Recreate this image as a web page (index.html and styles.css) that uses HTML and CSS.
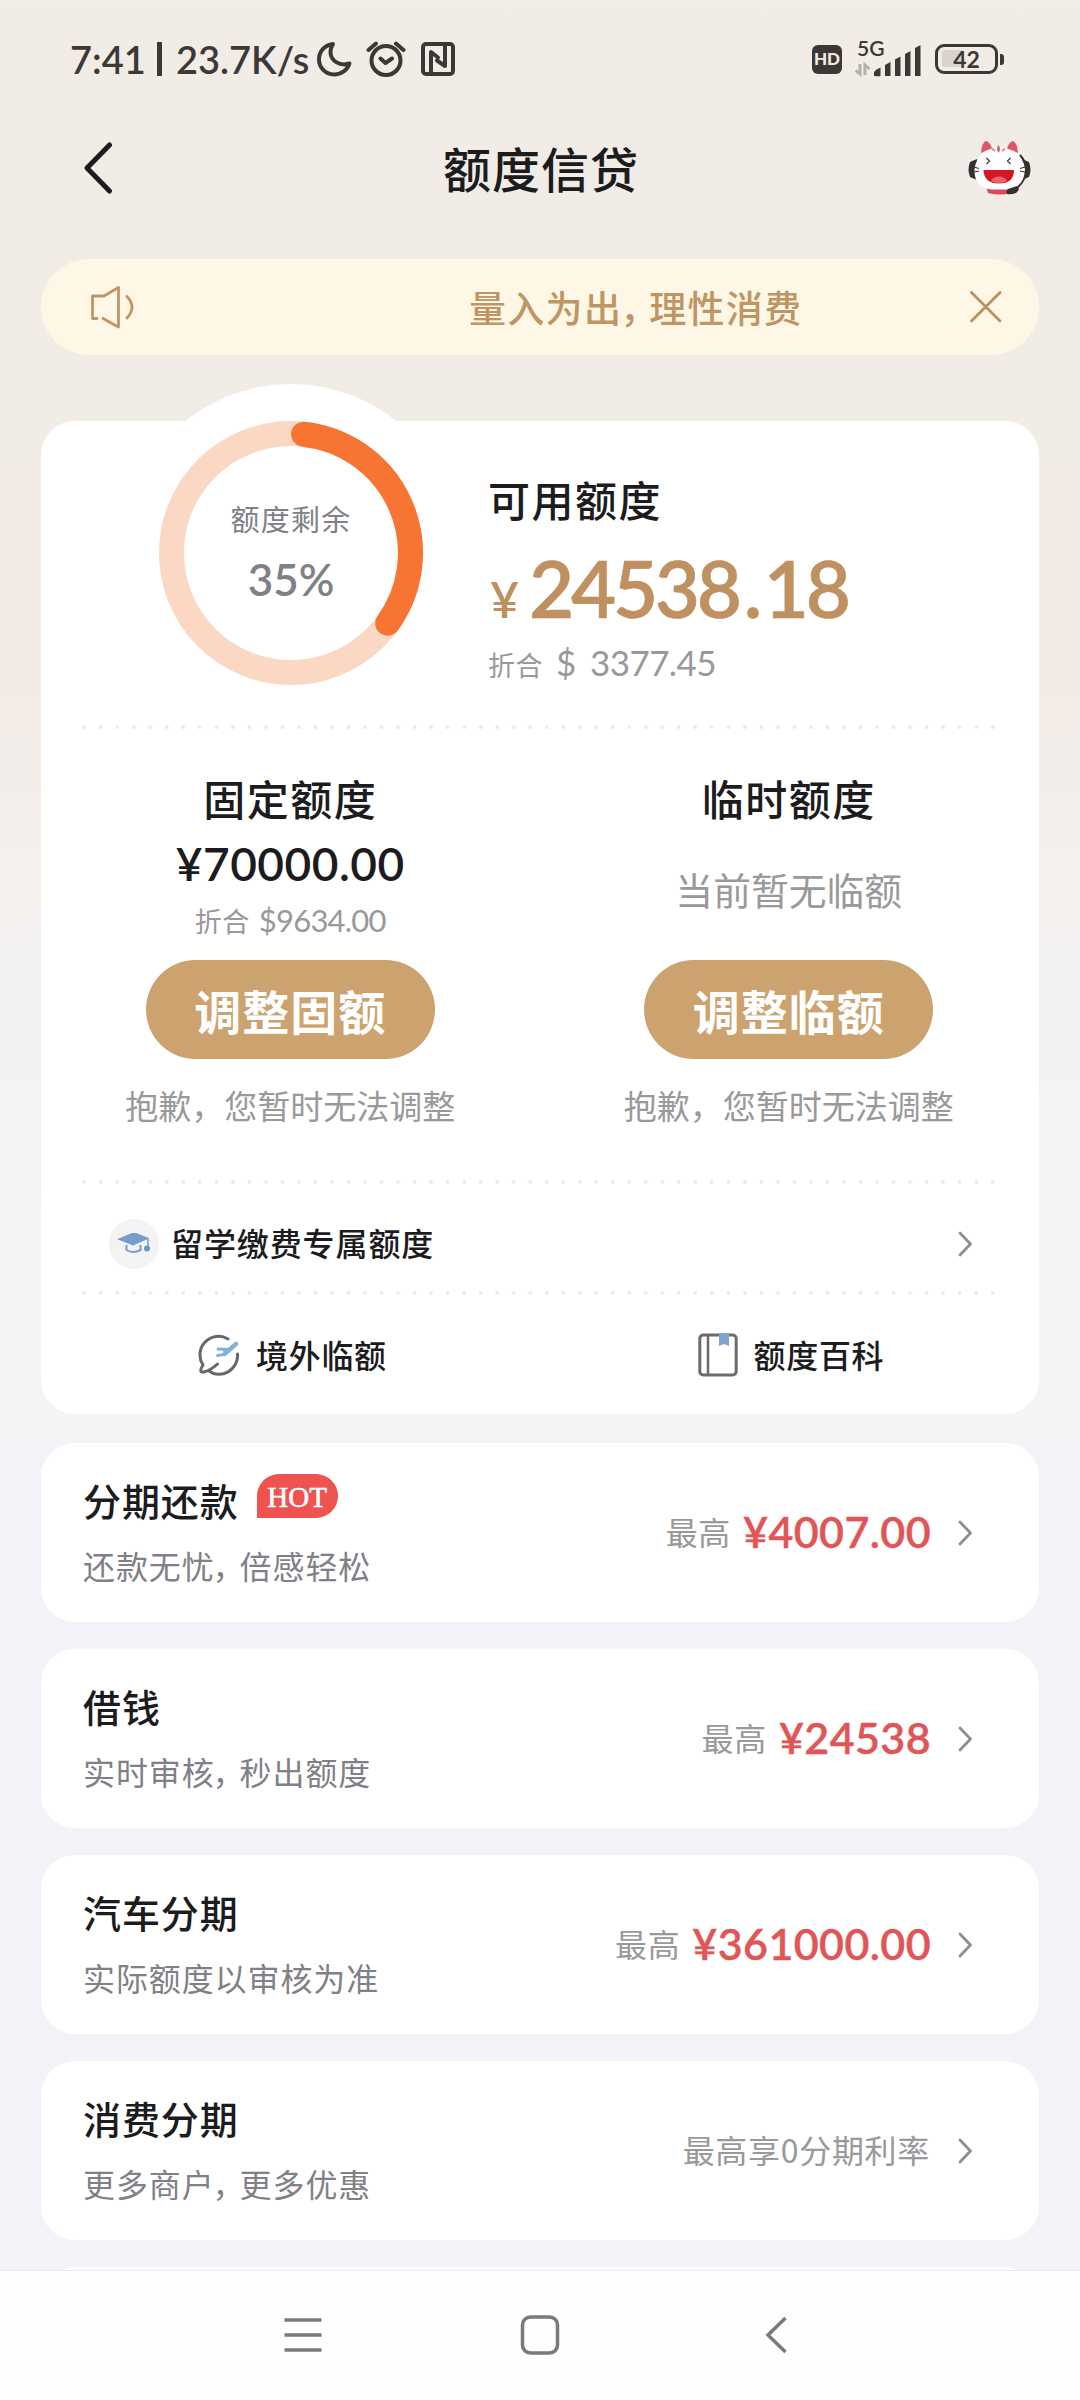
FILE: index.html
```html
<!DOCTYPE html>
<html lang="zh-CN">
<head>
<meta charset="utf-8">
<title>额度信贷</title>
<link rel="stylesheet" href="styles.css">
</head>
<body>
<div class="screen">
  <div class="status">
    <span class="status-time">7:41</span>
    <span class="status-sep"></span>
    <span class="status-speed">23.7K/s</span>
    <svg class="moon" width="36" height="36" viewBox="0 0 36 36"><path d="M17 3C9 4 3 10 3 18.500C3 27 10 33.500 18 33.500C25.500 33.500 31.500 29 33.500 22.500C24 25.500 15 20 14.500 12C14.500 8 15.500 5 17 3Z" fill="none" stroke="#3d3835" stroke-width="4" stroke-linejoin="round"/></svg>
    <svg class="alarm" width="40" height="36" viewBox="0 0 40 36" fill="none" stroke="#3d3835" stroke-width="4" stroke-linecap="round" stroke-linejoin="round"><circle cx="20" cy="19.500" r="14.500"/><path d="M2.500 9L10 2.500M37.500 9L30 2.500M14.500 17.500L19.500 22L26 17.500"/></svg>
    <svg class="nfc" width="34" height="34" viewBox="0 0 34 34" fill="none" stroke="#3d3835" stroke-width="4" stroke-linejoin="round"><rect x="2" y="2" width="30" height="30" rx="3"/><path d="M10 32V10L17 15.500M24 2V24L16 18.500" stroke-linecap="round"/></svg>
    <span class="spacer"></span>
    <span class="hd">HD</span>
    <span class="network">
      <span class="network-type">5G</span>
      <svg width="66" height="36" viewBox="0 0 66 36"><g fill="#3d3835"><path d="M19 35V31Q21 28 25.500 26.500V35Q25 35.500 19 35Z"/><path d="M30 35V24L35.500 21V35Z"/><path d="M40 35V18.500L45.500 15.500V35Z"/><path d="M50 35V13L55.500 10V35Z"/><path d="M60 35V7L65.500 4V35Z"/></g><path d="M5 23V33L.500 29.500M10 34V24L14.500 28" fill="none" stroke="#b5b0ab" stroke-width="3"/></svg>
    </span>
    <span class="battery"><span class="battery-fill"></span><span class="battery-text">42</span></span>
    <span class="battery-nub"></span>
  </div>

  <div class="header">
    <svg class="back" width="30" height="52" viewBox="0 0 30 52"><path d="M26.500 3L4 26L26.500 49" fill="none" stroke="#1c1c1e" stroke-width="5" stroke-linecap="round" stroke-linejoin="round"/></svg>
    <h1>额度信贷</h1>
    <svg class="mascot" width="64" height="56" viewBox="0 0 64 56">
      <path d="M18 46H46L43 53Q32 56 20 53Z" fill="#d94b5c"/>
      <path d="M9 19L2 22Q-1 30 2 37L9 40ZM54 19L61 22Q64 30 61 37L54 40Z" fill="#34312f"/>
      <path d="M32 7C46 7 57 18 57 31C57 42 50 49 40 49.500H24C13 49 6.500 42 6.500 31C6.500 18 18 7 32 7Z" fill="#fff"/>
      <path d="M13 13Q14 2 18 1Q22 2 24 8.500Q18 10 13 13Z" fill="#df5668"/><path d="M50 13Q49 2 45 1Q41 2 39 8.500Q45 10 50 13Z" fill="#df5668"/>
      <path d="M52 15Q59 23 58 31Q57 41 50 47L42 52" fill="none" stroke="#34312f" stroke-width="2"/>
      <path d="M39 54Q37 49 43 48L49 46L51 49Q49 55 39 54Z" fill="#34312f"/>
      <path d="M15.500 30H46Q46 43.500 31 43.500Q16 43.500 15.500 30Z" fill="#d61524"/><path d="M23 41Q25 36.500 31 36.500Q37 36.500 39 41Q31 45 23 41Z" fill="#ee626b"/>
      <path d="M30.500 5Q27.500 9 30.500 13Q33.500 9 30.500 5Z" fill="#c9656f"/><path d="M24 8.500L27 11M37 8.500L34 11" stroke="#d98b8f" stroke-width="2"/>
      <path d="M18.500 18L21.500 21L18.500 24M42.500 18L39.500 21L42.500 24M6 27L11 28.500M6 32L11 31M57 27L52 28.500M57 32L52 31" fill="none" stroke="#383230" stroke-width="1.200"/>
    </svg>
  </div>

  <div class="notice">
    <svg width="46" height="44" viewBox="0 0 46 44" fill="none" stroke="#c09566" stroke-width="2.800" stroke-linecap="round" stroke-linejoin="round"><path d="M7 33.500H2.500V11H14L28.500 2.500V42L13 33.500M37 11.500Q47 22 37 33"/></svg>
    <p>量入为出<i>，</i>理性消费</p>
    <svg width="34" height="34" viewBox="0 0 34 34"><path d="M2.500 2.500L31 31M31 2.500L2.500 31" fill="none" stroke="#bb8f60" stroke-width="2.800" stroke-linecap="round"/></svg>
  </div>

  <main class="limit-card">
    <section class="summary">
      <div class="donut">
        <svg width="338" height="338" viewBox="-169 -169 338 338" fill="none">
          <circle r="169" fill="#fff"/>
          <circle r="119.500" stroke="#fad8c3" stroke-width="25"/>
          <path d="M12.500 -118.800A119.500 119.500 0 0 1 96.700 70.200" stroke="#f87432" stroke-width="25" stroke-linecap="round"/>
        </svg>
        <div class="donut-text"><span class="donut-label">额度剩余</span><span class="donut-value">35%</span></div>
      </div>
      <div class="available">
        <h2>可用额度</h2>
        <div class="available-amount"><small>¥</small><b>24538<i>.</i>18</b></div>
        <div class="available-usd"><span>折合</span><b>$ 3377.45</b></div>
      </div>
    </section>
    <div class="dots"></div>
    <section class="columns">
      <div class="column">
        <h2>固定额度</h2>
        <div class="fixed-amount">¥70000.00</div>
        <div class="fixed-usd"><span>折合</span><b>$9634.00</b></div>
        <button class="adjust">调整固额</button>
        <p class="sorry">抱歉，您暂时无法调整</p>
      </div>
      <div class="column">
        <h2>临时额度</h2>
        <div class="none">当前暂无临额</div>
        <button class="adjust">调整临额</button>
        <p class="sorry">抱歉，您暂时无法调整</p>
      </div>
    </section>
    <div class="dots"></div>
    <div class="study">
      <span class="study-icon"><svg width="32" height="22" viewBox="0 0 32 22"><path d="M0 6.500L16 0L30 5.500V15" fill="none" stroke="#759ecb" stroke-width="1.500"/><path d="M0 6.500L16 0L30 6L15 12.500Z" fill="#759ecb"/><path d="M8.500 12V17Q15 21 22.500 17V12" fill="none" stroke="#759ecb" stroke-width="2"/><circle cx="29" cy="15.500" r="3" fill="#6d93c2"/></svg></span>
      <span class="study-text">留学缴费专属额度</span>
      <svg class="chevron" width="15" height="26" viewBox="0 0 15 26"><path d="M2 2L12.500 13L2 24"/></svg>
    </div>
    <div class="dots"></div>
    <div class="links">
      <div class="link"><svg width="42" height="42" viewBox="0 0 42 42" fill="none" stroke-linecap="round" stroke-linejoin="round"><path d="M30 5A18.500 18.500 0 0 0 5 31M39.500 20A18.500 18.500 0 0 1 10 36.500M5 31Q0 39 6 38Q13 36 19.500 30" stroke="#686868" stroke-width="3"/><path d="M38 10L27 19.500" stroke="#85b0dd" stroke-width="4.500"/><path d="M20 15L31 15.500M19.500 21.500L26 20.500M27 16L26 21" stroke="#85b0dd" stroke-width="2.800"/></svg><span>境外临额</span></div>
      <div class="link"><svg width="40" height="44" viewBox="0 0 40 44" fill="none"><rect x="1.800" y="2" width="36.400" height="40" rx="3.500" stroke="#6b6b6b" stroke-width="3"/><path d="M10 2V42" stroke="#6b6b6b" stroke-width="2.500"/><path d="M21 0H31V13L26 11L21 13Z" fill="#7fa4ce"/></svg><span>额度百科</span></div>
    </div>
  </main>

  <div class="products">
    <div class="product">
      <div class="product-info"><h3>分期还款<em>HOT</em></h3><p>还款无忧<i>，</i>倍感轻松</p></div>
      <span class="max">最高</span><span class="money">¥4007.00</span>
      <svg class="chevron" width="15" height="26" viewBox="0 0 15 26"><path d="M2 2L12.500 13L2 24"/></svg>
    </div>
    <div class="product">
      <div class="product-info"><h3>借钱</h3><p>实时审核<i>，</i>秒出额度</p></div>
      <span class="max">最高</span><span class="money">¥24538</span>
      <svg class="chevron" width="15" height="26" viewBox="0 0 15 26"><path d="M2 2L12.500 13L2 24"/></svg>
    </div>
    <div class="product">
      <div class="product-info"><h3>汽车分期</h3><p>实际额度以审核为准</p></div>
      <span class="max">最高</span><span class="money">¥361000.00</span>
      <svg class="chevron" width="15" height="26" viewBox="0 0 15 26"><path d="M2 2L12.500 13L2 24"/></svg>
    </div>
    <div class="product">
      <div class="product-info"><h3>消费分期</h3><p>更多商户<i>，</i>更多优惠</p></div>
      <span class="max">最高享0分期利率</span>
      <svg class="chevron" width="15" height="26" viewBox="0 0 15 26"><path d="M2 2L12.500 13L2 24"/></svg>
    </div>
    <div class="product"></div>
  </div>

  <nav class="nav">
    <svg width="40" height="40" viewBox="0 0 40 40"><path d="M1.500 5H38.500M1.500 20H38.500M1.500 35H38.500" stroke="#7a7a7a" stroke-width="3.500"/></svg>
    <svg width="40" height="40" viewBox="0 0 40 40"><rect x="2.500" y="2" width="35" height="36" rx="8" fill="none" stroke="#7a7a7a" stroke-width="3.500"/></svg>
    <svg width="40" height="40" viewBox="0 0 40 40"><path d="M28.500 3L11 20L28.500 37" fill="none" stroke="#7a7a7a" stroke-width="3.500"/></svg>
  </nav>
</div>
</body>
</html>
```
FILE: styles.css
```css
* { box-sizing: border-box; margin: 0; padding: 0; }
body { font-family: "Noto Sans CJK SC", sans-serif; color: #1c1c1e; }
svg { display: block; flex: none; }
i, em { font-style: normal; }
.screen {
  width: 1080px; height: 2400px; overflow: hidden;
  display: flex; flex-direction: column;
  background: linear-gradient(#f1ece6 0, #f2ebe6 700px, #f4f0ee 850px, #f3f3f2 1080px, #f4f4f4 1435px, #f2f3f8 1445px);
}
.status {
  height: 118px; flex: none; display: flex; align-items: center;
  padding: 0 76px 0 70px; color: #3d3835;
  font: 600 38px/118px Lato, sans-serif;
}
.status-time { width: 87px; }
.status-sep { width: 5px; height: 34px; background: #3d3835; margin-right: 14px; }
.status-speed { width: 140px; white-space: nowrap; }
.moon { margin-right: 14px; }
.alarm { margin-right: 15px; }
.spacer { flex: 1; }
.hd { width: 30px; height: 29px; border-radius: 6px; background: #3d3835; color: #f1ece6; font: 900 17px/28px Lato, sans-serif; text-align: center; margin-right: 13px; }
.network { position: relative; margin-right: 14px; }
.network-type { position: absolute; left: 2px; top: -3px; font: 600 21px/20px Lato, sans-serif; }
.battery { position: relative; width: 63px; height: 30px; border: 3.500px solid #3d3835; border-radius: 9px; text-align: center; }
.battery-fill { position: absolute; left: 4px; top: 3px; width: 20px; height: 17px; border-radius: 3px 0 0 3px; background: #d8d3cd; }
.battery-text { position: relative; display: block; font: 700 23px/24px Lato, sans-serif; }
.battery-nub { width: 4px; height: 11px; margin-left: 2px; background: #3d3835; border-radius: 0 3px 3px 0; }

.header { height: 100px; flex: none; display: flex; align-items: center; justify-content: space-between; padding: 0 48px 0 83px; }
.header h1 { font-size: 48px; line-height: 70px; font-weight: 500; letter-spacing: 1px; margin: -3px 0 0 1px; }
.notice { height: 96px; margin: 41px 41px 0; flex: none; display: flex; align-items: center; padding: 0 36px 0 49px; border-radius: 48px; background: #fef7e6; color: #bf9563; }
.notice p { flex: 1; padding-left: 333px; font-size: 37px; line-height: 50px; letter-spacing: 1.300px; font-weight: 500; }
.notice i, .product-info p i { display: inline-block; letter-spacing: 0; font-feature-settings: "halt"; text-indent: -2px; }
.notice i { width: 27px; }

.limit-card { height: 993px; flex: none; margin: 66px 41px 0; border-radius: 34px; background: #fff; }
.summary { height: 304px; display: flex; padding-left: 81px; }
.donut { position: relative; width: 338px; height: 338px; margin-top: -37px; }
.donut-text { position: absolute; inset: 0; display: flex; flex-direction: column; align-items: center; color: #808086; }
.donut-label { margin-top: 113px; font-size: 29px; line-height: 42px; letter-spacing: 1.200px; }
.donut-value { margin-top: 14px; font: 600 44px/52px Lato, sans-serif; }
.available { padding: 48px 0 0 28px; }
h2 { font-size: 42px; line-height: 60px; font-weight: 500; letter-spacing: 1.500px; }
.available-amount { height: 112px; margin-top: 3px; display: flex; align-items: baseline; color: #bf9160; font-family: Lato, sans-serif; line-height: 112px; }
.available-amount small { width: 41px; padding-left: 2px; font-size: 50px; font-weight: 600; }
.available-amount b { font-size: 78px; font-weight: 600; letter-spacing: -3.300px; -webkit-text-stroke: .6px #bf9160; }
.available-amount i { padding: 0 5px; }
.available-usd, .fixed-usd { display: flex; align-items: baseline; color: #999; }
.available-usd { line-height: 44px; margin-top: -4px; }
.available-usd span { font-size: 27px; width: 68px; letter-spacing: .5px; }
.available-usd b { font: 400 35px/44px Lato, sans-serif; letter-spacing: -.6px; word-spacing: 6px; }
.dots { height: 4px; margin: 0 40px; background: radial-gradient(circle, #eaeaea 1.600px, transparent 2.200px) -5px 0 / 16.530px 4px repeat-x; }
.columns { height: 451px; display: flex; }
.column { flex: 1; display: flex; flex-direction: column; align-items: center; padding-top: 39px; }
.columns { padding-right: 1px; }
.fixed-amount { height: 69px; font: 600 46px/72px Lato, sans-serif; letter-spacing: .5px; }
.fixed-usd { height: 63px; line-height: 46px; }
.fixed-usd span { width: 64px; font-size: 27px; letter-spacing: .5px; }
.fixed-usd b { font: 400 31px/46px Lato, sans-serif; letter-spacing: -.8px; }
.none { height: 132px; padding-top: 33px; font-size: 37.800px; line-height: 56px; color: #999; }
.adjust { width: 289px; height: 99px; border: 0; border-radius: 50px; background: #cca26f; color: #fff; font: 700 47px/96px "Noto Sans CJK SC", sans-serif; letter-spacing: 1px; }
.sorry { margin-top: 21px; font-size: 33px; line-height: 50px; color: #999; }
.study { height: 107px; display: flex; align-items: center; padding: 12px 66px 0 68px; }
.study-icon { width: 50px; height: 50px; border-radius: 50%; background: #f3f3f4; display: flex; align-items: center; justify-content: center; margin-right: 12px; }
.study-text { flex: 1; font-size: 32px; line-height: 46px; font-weight: 500; letter-spacing: .9px; margin-top: -3px; }
.chevron path { fill: none; stroke: #8e8e8e; stroke-width: 2.800; stroke-linecap: round; stroke-linejoin: round; }
.links { display: flex; height: 119px; }
.link { flex: 1; display: flex; align-items: center; padding-left: 157px; font-size: 32px; font-weight: 500; letter-spacing: .7px; }
.link + .link { padding-left: 158px; }
.link span { margin: -2px 0 0 16px; line-height: 46px; }

.products { flex: none; height: 856px; overflow: hidden; padding: 29px 41px 0; display: flex; flex-direction: column; gap: 27px; }
.product { height: 179px; flex: none; border-radius: 34px; background: #fff; display: flex; align-items: center; padding: 0 66px 0 42px; }
.product-info { flex: 1; margin-top: -4px; }
.product-info h3 { display: flex; height: 54px; font-size: 38px; line-height: 54px; font-weight: 500; letter-spacing: .9px; }
.product-info em { width: 81px; height: 44px; margin: 1px 0 0 18px; border-radius: 22px 22px 22px 0; background: #ee5350; color: #fff; font: 400 29px/46px "Liberation Serif", serif; letter-spacing: 0; text-align: center; -webkit-text-stroke: .6px #fff; }
.product-info p { margin-top: 15px; font-size: 32px; line-height: 46px; letter-spacing: .9px; color: #808086; }
.product-info p i { width: 25px; }
.max { font-size: 32px; line-height: 46px; letter-spacing: .7px; color: #999; margin-top: -3px; }
.money { margin: -2px -1px 0 12px; font: 600 43px/52px Lato, sans-serif; letter-spacing: .4px; color: #e05657; -webkit-text-stroke: .4px #e05657; }
.product .chevron { margin-left: 28px; }

.nav { height: 130px; flex: none; display: flex; justify-content: center; gap: 197px; padding-top: 44px; background: #fefefe; border-top: 1px solid #e9e9ea; }
```
